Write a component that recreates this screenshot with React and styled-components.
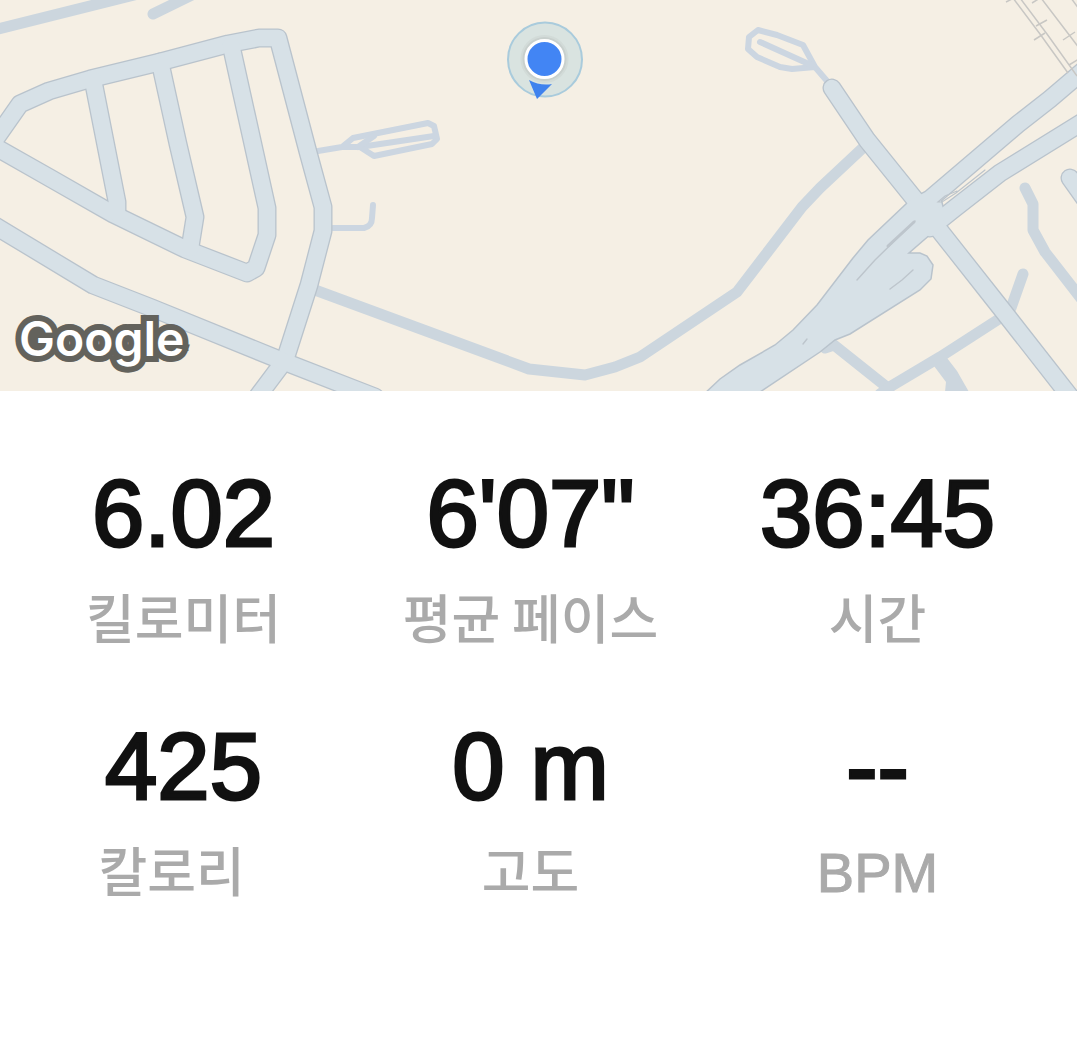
import React from "react";
import styled, { createGlobalStyle } from "styled-components";

const GlobalStyle = createGlobalStyle`
  * { box-sizing: border-box; }
  body {
    margin: 0;
    background: #ffffff;
    color: #111111;
    font-family: "Liberation Sans", "Noto Sans CJK KR", sans-serif;
  }
`;

const Screen = styled.main`
  display: flex;
  flex-direction: column;
  min-height: 100vh;
`;

const MapPanel = styled.section`
  position: relative;
  height: 391px;
  overflow: hidden;
  background: #f5efe4;
`;

const MapDrawing = styled.svg`
  display: block;
  width: 100%;
  height: 100%;
`;

const Attribution = styled.span`
  position: absolute;
  left: 19px;
  bottom: 20px;
  font-family: Inter, sans-serif;
  font-size: 48px;
  line-height: 64px;
  font-weight: 600;
  color: #ffffff;
  -webkit-text-stroke: 12px #63625c;
  paint-order: stroke fill;
`;

const Stats = styled.dl`
  display: grid;
  grid-template-columns: repeat(3, 1fr);
  row-gap: 71px;
  margin: 0;
  padding: 75px 26px 75px 10px;
`;

const Stat = styled.div`
  display: flex;
  flex-direction: column-reverse;
  align-items: center;
  gap: 22px;
`;

const Value = styled.dd`
  margin: 0;
  font-size: 94px;
  line-height: 96px;
  white-space: nowrap;
  -webkit-text-stroke: 3px #111111;
`;

const Label = styled.dt`
  font-family: "Noto Sans CJK KR", sans-serif;
  font-size: 53px;
  line-height: 64px;
  font-weight: 500;
  color: #aaaaaa;
  white-space: pre;
`;

const LatinText = styled.span`
  font-family: "Liberation Sans", sans-serif;
  font-size: 56px;
  line-height: 56px;
  font-weight: 400;
  -webkit-text-stroke: 1px #aaaaaa;
`;

const stats = [
  { value: "6.02", label: "킬로미터" },
  { value: "6'07\"", label: "평균 페이스" },
  { value: "36:45", label: "시간" },
  { value: "425", label: "칼로리\u00a0\u00a0" },
  { value: "0 m", label: "고도" },
  { value: "--", label: "BPM", latin: true },
];

const streets = [
  "M-6 141 L20 104 L49 91 L90 79 L160 62 L228 44 L259 38 L278 38 L308 152 L323 207 L323 231 L309 285 L285 360 L255 400",
  "M-10 144 L50 178 L113 214 L185 249 L247 273 L256 268 L267 235 L267 208 L231 45",
  "M160 62 L178 144 L195 217 L190 248",
  "M93 80 L117 202 L117 213",
  "M-8 224 L93 285 L152 308 L285 362 L375 397",
  "M832 88 L867 140 L925 212 L1000 307 L1072 399",
  "M915 207 L930 199 L1018 124 L1050 99 L1084 70",
  "M930 228 L955 208 L1000 173 L1084 121",
  "M1070 178 L1090 206",
];

const lanes = [
  "M-6 30 L150 -9",
  "M153 14 L196 -7",
  "M315 290 L529 369 L585 375 L615 367 L640 357 L737 292 L802 207 L820 188 L867 144",
  "M1025 188 L1033 204 L1033 230 L1045 252 L1083 301",
  "M1023 274 L1011 308",
  "M825 348 L834 345 L888 388 L940 357 L1002 317",
  "M880 394 L890 387",
];

const paths = [
  "M318 151 L342 147 L353 138 L428 123 L434 126 L437 139 L432 144 L374 156 L360 147 L342 147",
  "M360 147 L434 136",
  "M358 147 L374 136",
  "M333 228 L364 228 Q372 226 372 218 L373 205",
  "M827 81 L815 67 L803 45 L777 35 L758 30 L749 37 L748 49 L757 57 L780 67 L792 69 L815 67",
  "M760 42 L811 65",
];

const junction =
  "M907 203 L868 240 L853 258 L817 305 L793 330 L775 345 L740 365 L720 379 L702 396 L754 396 L820 352 L835 340 L850 334 L920 290 L931 279 L933 265 L927 256 L920 253 L909 253 L932 233 L947 221 L940 195 Z";

function StreetMap() {
  return (
    <MapDrawing viewBox="0 0 1077 391" preserveAspectRatio="xMidYMid slice" aria-hidden="true">
      <g fill="none" stroke="#ccd6e1" strokeWidth="6" strokeLinecap="round" strokeLinejoin="round">
        {paths.map((d) => <path key={d} d={d} />)}
      </g>
      <g fill="none" stroke="#ccd6de" strokeWidth="11" strokeLinecap="round" strokeLinejoin="round">
        {lanes.map((d) => <path key={d} d={d} />)}
      </g>
      <path d="M934 366 L947 358 L957 371 L969 392 L945 392 L946 382 Z" fill="#ccd6de" />

      <g fill="none" stroke="#b9c3cc" strokeWidth="19" strokeLinecap="round" strokeLinejoin="round">
        {streets.map((d) => <path key={d} d={d} />)}
      </g>
      <path d={junction} fill="#d7e1e7" stroke="#b9c3cc" strokeWidth="1.5" />
      <g fill="none" stroke="#d7e1e7" strokeWidth="16.4" strokeLinecap="round" strokeLinejoin="round">
        {streets.map((d) => <path key={d} d={d} />)}
      </g>
      <path d="M902 225 L934 196 L944 222 L922 240 Z" fill="#d7e1e7" />
      <g fill="none" stroke="#bdc5cc" strokeLinecap="round">
        <path d="M915 221 L875 260 L857 280" strokeWidth="1.4" />
        <path d="M914 222 L888 246" strokeWidth="3" />
        <path d="M913 270 L902 280 L890 289" strokeWidth="1.4" />
        <path d="M807 339 L803 344" strokeWidth="1.4" />
        <path d="M957 191 L945 196 L938 202 L942 202 L956 193 L985 170" strokeWidth="1.2" />
      </g>

      <g fill="none" stroke="#c8c7c4" strokeWidth="1.5">
        <path d="M1013 -2 L1040 34 L1068 73" />
        <path d="M1020 -2 L1047 34 L1077 76" />
        <path d="M1041 -2 L1070 36 L1079 48" />
        <path d="M1071 -2 L1079 9" />
        <path d="M1034 40 L1045 33 M1036 26 L1047 20 M1063 40 L1075 32 M1069 65 L1079 59 M1006 2 L1014 -2 M1032 3 L1040 -2" />
      </g>

      <circle cx="545" cy="59.5" r="37" fill="#d9e3e0" stroke="#a9cbdc" strokeWidth="2" />
      <circle cx="544.5" cy="59" r="24" fill="#cdd5d2" opacity="0.6" />
      <circle cx="544.5" cy="59" r="22" fill="#c1c8c6" opacity="0.6" />
      <circle cx="544.5" cy="59" r="18.5" fill="#4285f4" stroke="#ffffff" strokeWidth="3" />
      <path d="M529 80 Q540 86 552 84 L537 99 Z" fill="#3f82ee" />
    </MapDrawing>
  );
}

export default function App() {
  return (
    <Screen>
      <GlobalStyle />
      <MapPanel>
        <StreetMap />
        <Attribution>Google</Attribution>
      </MapPanel>
      <Stats>
        {stats.map((s) => (
          <Stat key={s.label}>
            <Label>{s.latin ? <LatinText>{s.label}</LatinText> : s.label}</Label>
            <Value>{s.value}</Value>
          </Stat>
        ))}
      </Stats>
    </Screen>
  );
}
